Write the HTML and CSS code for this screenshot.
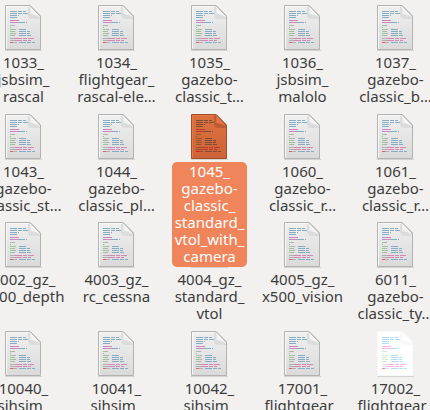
FILE: index.html
```html
<!DOCTYPE html>
<html lang="en">
<head>
<meta charset="utf-8">
<title>Files</title>
<link rel="stylesheet" href="styles.css">
</head>
<body>
<svg class="defs" aria-hidden="true">
  <defs>
    <linearGradient id="paper" x1="0" y1="0" x2="0" y2="1">
      <stop offset="0" class="paper-top"/>
      <stop offset="1" class="paper-bottom"/>
    </linearGradient>
    <linearGradient id="paper-selected" x1="0" y1="0" x2="0" y2="1">
      <stop offset="0" stop-color="#dd713f"/>
      <stop offset="1" stop-color="#cd6338"/>
    </linearGradient>
    <linearGradient id="fold" x1="0" y1="1" x2="0.6" y2="0.4">
      <stop offset="0" stop-color="#e2e2e2"/>
      <stop offset="1" stop-color="#ffffff"/>
    </linearGradient>
    <linearGradient id="fold-selected" x1="0" y1="1" x2="0.6" y2="0.4">
      <stop offset="0" stop-color="#cf683c"/>
      <stop offset="1" stop-color="#ef8152"/>
    </linearGradient>
    <symbol id="script" viewBox="0 0 37 46">
      <path class="shadow" d="M0 45.5H37"/>
      <path class="page" d="M.5 .5H25L35.500 11V44.500H.5Z"/>
      <path class="gleam" d="M1.500 43.500V1.500H24"/>
      <path class="fold-shadow" d="M23 2V10Q23 14 28 14H35V11L25 1Z"/>
      <path class="fold" d="M25 1Q26 5 25 9Q29 9 35 12Z"/>
      <path class="fold-edge" d="M25 .5L35.500 11.500"/>
      <g class="code">
        <path class="blue" d="M5 6.500H21M5 8.500H23M5 10.500H14M5 12.500H12M13 17.500H22M14 24.500H21M14 26.500H25M14 28.500H25M14 30.500H26M14 37.500H30"/>
        <path class="purple" d="M5 15.500H8M5 17.500H8"/>
        <path class="pink" d="M8 15.500H14M8 17.500H13M10 33.500H29M10 35.500H26"/>
        <path class="green" d="M5 20.500H7M5 24.500H9M5 26.500H7M5 28.500H9M5 30.500H7"/>
        <path class="gray" d="M7 20.500H10M5 22.500H6M9 24.500H11M7 26.500H10M9 28.500H11M7 30.500H10M5 33.500H10M5 35.500H10M8 37.500H12"/>
        <path class="red" d="M5 37.500H8"/>
      </g>
    </symbol>
  </defs>
</svg>
<main>
  <ul class="files">
    <li><button class="file" type="button"><svg class="icon" aria-hidden="true"><use href="#script"/></svg><span class="name"><span>1033_</span><span>jsbsim_</span><span>rascal</span></span></button></li>
    <li><button class="file" type="button"><svg class="icon" aria-hidden="true"><use href="#script"/></svg><span class="name"><span>1034_</span><span>flightgear_</span><span>rascal-ele…</span></span></button></li>
    <li><button class="file" type="button"><svg class="icon" aria-hidden="true"><use href="#script"/></svg><span class="name"><span>1035_</span><span>gazebo-</span><span>classic_t…</span></span></button></li>
    <li><button class="file" type="button"><svg class="icon" aria-hidden="true"><use href="#script"/></svg><span class="name"><span>1036_</span><span>jsbsim_</span><span>malolo</span></span></button></li>
    <li><button class="file" type="button"><svg class="icon" aria-hidden="true"><use href="#script"/></svg><span class="name"><span>1037_</span><span>gazebo-</span><span>classic_b…</span></span></button></li>

    <li><button class="file" type="button"><svg class="icon" aria-hidden="true"><use href="#script"/></svg><span class="name"><span>1043_</span><span>gazebo-</span><span>classic_st…</span></span></button></li>
    <li><button class="file" type="button"><svg class="icon" aria-hidden="true"><use href="#script"/></svg><span class="name"><span>1044_</span><span>gazebo-</span><span>classic_pl…</span></span></button></li>
    <li><button class="file selected" type="button" aria-pressed="true"><svg class="icon" aria-hidden="true"><use href="#script"/></svg><span class="name"><span>1045_</span><span>gazebo-</span><span>classic_</span><span>standard_</span><span>vtol_with_</span><span>camera</span></span></button></li>
    <li><button class="file" type="button"><svg class="icon" aria-hidden="true"><use href="#script"/></svg><span class="name"><span>1060_</span><span>gazebo-</span><span>classic_r…</span></span></button></li>
    <li><button class="file" type="button"><svg class="icon" aria-hidden="true"><use href="#script"/></svg><span class="name"><span>1061_</span><span>gazebo-</span><span>classic_r…</span></span></button></li>

    <li><button class="file" type="button"><svg class="icon" aria-hidden="true"><use href="#script"/></svg><span class="name"><span>4002_gz_</span><span>x500_depth</span></span></button></li>
    <li><button class="file" type="button"><svg class="icon" aria-hidden="true"><use href="#script"/></svg><span class="name"><span>4003_gz_</span><span>rc_cessna</span></span></button></li>
    <li><button class="file" type="button"><svg class="icon" aria-hidden="true"><use href="#script"/></svg><span class="name"><span>4004_gz_</span><span>standard_</span><span>vtol</span></span></button></li>
    <li><button class="file" type="button"><svg class="icon" aria-hidden="true"><use href="#script"/></svg><span class="name"><span>4005_gz_</span><span>x500_vision</span></span></button></li>
    <li><button class="file" type="button"><svg class="icon" aria-hidden="true"><use href="#script"/></svg><span class="name"><span>6011_</span><span>gazebo-</span><span>classic_ty…</span></span></button></li>

    <li><button class="file" type="button"><svg class="icon" aria-hidden="true"><use href="#script"/></svg><span class="name"><span>10040_</span><span>sihsim_</span></span></button></li>
    <li><button class="file" type="button"><svg class="icon" aria-hidden="true"><use href="#script"/></svg><span class="name"><span>10041_</span><span>sihsim_</span></span></button></li>
    <li><button class="file" type="button"><svg class="icon" aria-hidden="true"><use href="#script"/></svg><span class="name"><span>10042_</span><span>sihsim_</span></span></button></li>
    <li><button class="file" type="button"><svg class="icon" aria-hidden="true"><use href="#script"/></svg><span class="name"><span>17001_</span><span>flightgear_</span></span></button></li>
    <li><button class="file highlighted" type="button"><svg class="icon" aria-hidden="true"><use href="#script"/></svg><span class="name"><span>17002_</span><span>flightgear_</span></span></button></li>
  </ul>
</main>
</body>
</html>
```
FILE: styles.css
```css
body {
  margin: 0;
  height: 100vh;
  overflow: hidden;
  background: #f2f1f0;
  color: #3c3c3c;
  font: 15px/17px "Noto Sans", "Open Sans", sans-serif;
}

.defs {
  position: absolute;
  width: 0;
  height: 0;
}

/* The outer columns run past the edges of the view. */
.files {
  display: grid;
  grid-template-columns: repeat(5, minmax(0, 1fr));
  grid-template-rows: 109px 108px;
  grid-auto-rows: 109px;
  list-style: none;
  margin: 0 -12px 0 -23px;
  padding: 5px 0 0;
}

.file {
  display: flex;
  flex-direction: column;
  align-items: center;
  gap: 2px;
  width: 100%;
  padding: 0;
  border: 0;
  background: none;
  color: inherit;
  font: inherit;
}

.icon {
  display: block;
  flex: none;
  width: 37px;
  height: 46px;
  --page: url(#paper);
  --fold: url(#fold);
  --border: #b2b2b2;
  --gleam: #f8f8f8;
  --shade: #d2d2d2;
  --blue: #86adc2;
  --purple: #b58ad2;
  --pink: #d588b4;
  --green: #98cc92;
  --gray: #b0b0b0;
  --red: #e06468;
}

.name {
  display: flex;
  flex-direction: column;
  align-items: center;
  padding: 1px 3px 2px;
  border-radius: 5px;
  white-space: nowrap;
}

.selected {
  position: relative;
  z-index: 1;
}

.selected .name {
  background: rgb(240 130 88 / 98%);
  color: #fff;
}

.selected .icon {
  --page: url(#paper-selected);
  --fold: url(#fold-selected);
  --border: #a64d2a;
  --gleam: #e47847;
  --shade: #ad502c;
  --blue: #7c4c38;
  --purple: #b03c2c;
  --pink: #bb3a2c;
  --green: #886026;
  --gray: #985030;
  --red: #d02018;
}

.highlighted .icon {
  --page: #fff;
  --fold: #fff;
  --border: #f8f8f8;
  --gleam: #fff;
  --shade: #f4f4f4;
  --blue: #b0dcf4;
  --purple: #e4b0fc;
  --pink: #fcb4e0;
  --green: #c8fac0;
  --gray: #e0e0e0;
  --red: #ff8488;
}

.paper-top { stop-color: #f0f0f0; }
.paper-bottom { stop-color: #dadada; }

.page { fill: var(--page); stroke: var(--border); }
.gleam { fill: none; stroke: var(--gleam); }
.shadow { stroke: #000; stroke-opacity: .12; }
.fold-shadow { fill: var(--shade); opacity: .6; }
.fold { fill: var(--fold); }
.fold-edge { stroke: var(--border); }

.code { stroke-dasharray: 7 1 4 1; }
.code path { stroke: var(--gray); }
.code .blue { stroke: var(--blue); }
.code .purple { stroke: var(--purple); }
.code .pink { stroke: var(--pink); }
.code .green { stroke: var(--green); }
.code .red { stroke: var(--red); }
```
